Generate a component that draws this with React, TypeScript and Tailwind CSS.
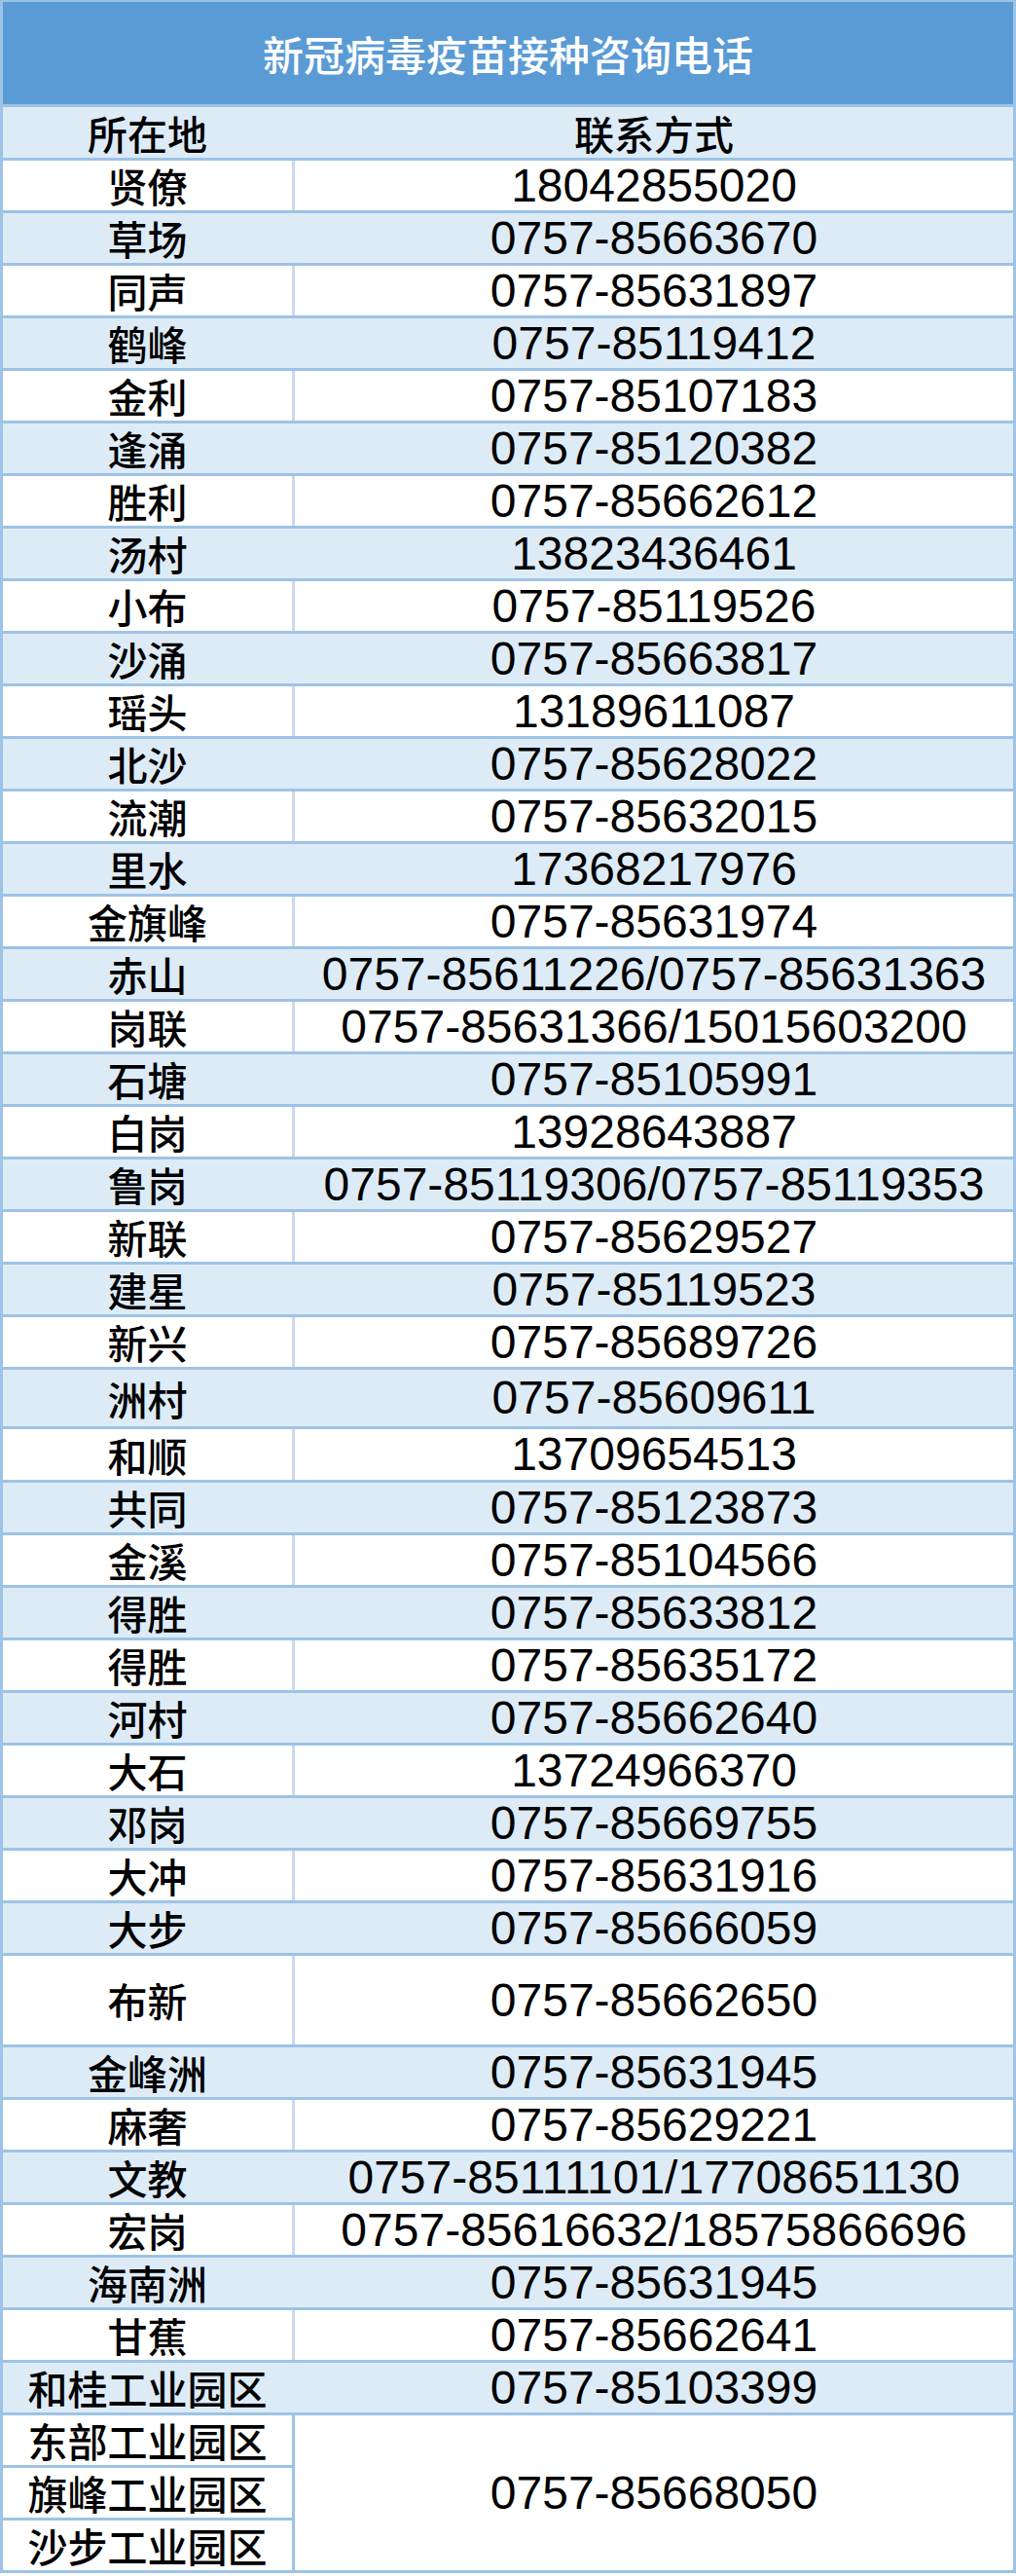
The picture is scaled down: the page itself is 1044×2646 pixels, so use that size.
import React from 'react';

interface Entry {
  place: string;
  phone: string;
  h?: string;
}

// 行高（含 3px 下边框）按原图量出
const entries: Entry[] = [
  { place: '贤僚', phone: '18042855020' },
  { place: '草场', phone: '0757-85663670' },
  { place: '同声', phone: '0757-85631897' },
  { place: '鹤峰', phone: '0757-85119412' },
  { place: '金利', phone: '0757-85107183' },
  { place: '逢涌', phone: '0757-85120382' },
  { place: '胜利', phone: '0757-85662612' },
  { place: '汤村', phone: '13823436461' },
  { place: '小布', phone: '0757-85119526' },
  { place: '沙涌', phone: '0757-85663817' },
  { place: '瑶头', phone: '13189611087' },
  { place: '北沙', phone: '0757-85628022' },
  { place: '流潮', phone: '0757-85632015' },
  { place: '里水', phone: '17368217976' },
  { place: '金旗峰', phone: '0757-85631974' },
  { place: '赤山', phone: '0757-85611226/0757-85631363' },
  { place: '岗联', phone: '0757-85631366/15015603200' },
  { place: '石塘', phone: '0757-85105991' },
  { place: '白岗', phone: '13928643887' },
  { place: '鲁岗', phone: '0757-85119306/0757-85119353' },
  { place: '新联', phone: '0757-85629527' },
  { place: '建星', phone: '0757-85119523' },
  { place: '新兴', phone: '0757-85689726' },
  { place: '洲村', phone: '0757-85609611', h: 'h-[61px]' },
  { place: '和顺', phone: '13709654513', h: 'h-[55px]' },
  { place: '共同', phone: '0757-85123873' },
  { place: '金溪', phone: '0757-85104566' },
  { place: '得胜', phone: '0757-85633812' },
  { place: '得胜', phone: '0757-85635172' },
  { place: '河村', phone: '0757-85662640' },
  { place: '大石', phone: '13724966370' },
  { place: '邓岗', phone: '0757-85669755' },
  { place: '大冲', phone: '0757-85631916' },
  { place: '大步', phone: '0757-85666059' },
  { place: '布新', phone: '0757-85662650', h: 'h-[94px]' },
  { place: '金峰洲', phone: '0757-85631945' },
  { place: '麻奢', phone: '0757-85629221' },
  { place: '文教', phone: '0757-85111101/17708651130' },
  { place: '宏岗', phone: '0757-85616632/18575866696' },
  { place: '海南洲', phone: '0757-85631945' },
  { place: '甘蕉', phone: '0757-85662641' },
  { place: '和桂工业园区', phone: '0757-85103399' },
];

const parks = ['东部工业园区', '旗峰工业园区', '沙步工业园区'];

const cjk = "font-['Noto_Sans_CJK_SC',sans-serif]";
const num = "font-['Liberation_Sans','Noto_Sans_CJK_SC',sans-serif]";

const Row: React.FC<{ entry: Entry; shaded: boolean }> = ({ entry, shaded }) => (
  <div
    className={`flex ${entry.h ?? 'h-[54px]'} border-b-[3px] border-[#9dc3e6] ${
      shaded ? 'bg-[#ddebf7]' : 'bg-white'
    }`}
  >
    <div
      className={`flex w-[300px] shrink-0 items-center justify-center border-r-[3px] ${
        shaded ? 'border-[#ddebf7]' : 'border-[#cbd9ec]'
      } ${cjk} text-[41px] font-medium leading-none text-black`}
    >
      {entry.place}
    </div>
    <div className={`flex flex-1 items-center justify-center ${num} text-[48px] leading-none text-black`}>
      {entry.phone}
    </div>
  </div>
);

export default function App() {
  return (
    <div className="w-[1044px] border-x-[3px] border-t-2 border-[#9dc3e6] bg-white">
      <div
        className={`flex h-[108px] items-center justify-center border-b-[3px] border-[#9dc3e6] bg-[#5b9bd5] ${cjk} text-[42px] font-medium leading-none text-white`}
      >
        新冠病毒疫苗接种咨询电话
      </div>

      <div className={`flex h-[55px] border-b-[3px] border-[#9dc3e6] bg-[#ddebf7] ${cjk} text-[41px] font-medium leading-none text-black`}>
        <div className="flex w-[300px] shrink-0 items-center justify-center border-r-[3px] border-[#ddebf7]">
          所在地
        </div>
        <div className="flex flex-1 items-center justify-center">联系方式</div>
      </div>

      {entries.map((entry, i) => (
        <Row key={i} entry={entry} shaded={i % 2 === 1} />
      ))}

      {/* 三个园区合用一个号码 */}
      <div className="flex h-[162px] items-stretch bg-white">
        <div className="flex h-[162px] w-[300px] shrink-0 flex-col border-r-[3px] border-[#9dc3e6]">
          {parks.map((p) => (
            <div
              key={p}
              className={`flex h-[54px] shrink-0 items-center justify-center border-b-[3px] border-[#9dc3e6] ${cjk} text-[41px] font-medium leading-none text-black`}
            >
              {p}
            </div>
          ))}
        </div>
        <div
          className={`flex h-[162px] flex-1 items-center justify-center border-b-[3px] border-[#9dc3e6] ${num} text-[48px] leading-none text-black`}
        >
          0757-85668050
        </div>
      </div>
    </div>
  );
}
